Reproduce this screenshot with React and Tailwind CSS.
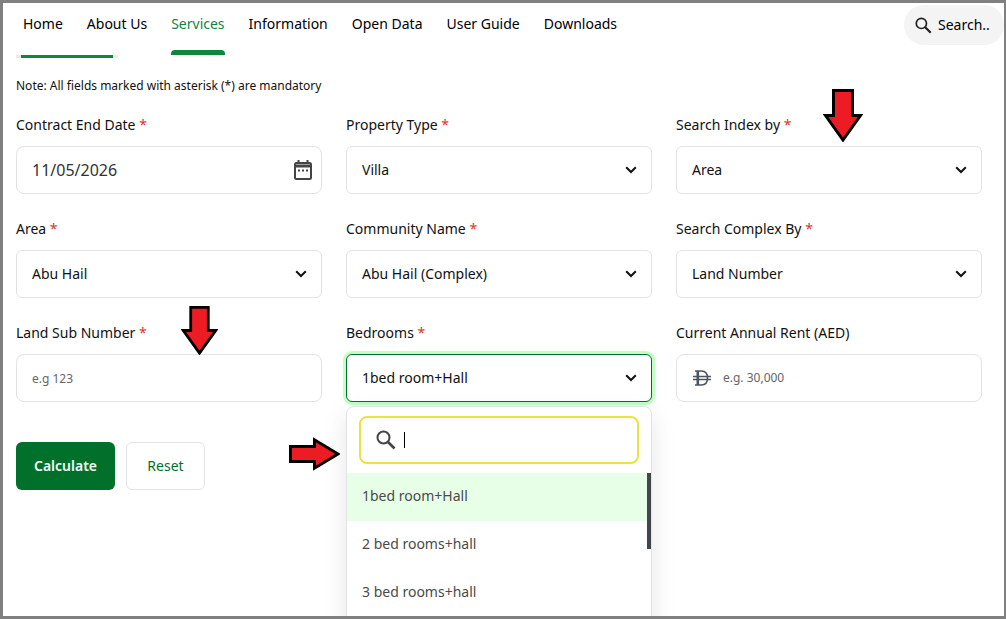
import React, { useState } from 'react';
import clsx from 'clsx';

const NAV = ['Home', 'About Us', 'Services', 'Information', 'Open Data', 'User Guide', 'Downloads'];

const BEDROOMS = ['1bed room+Hall', '2 bed rooms+hall', '3 bed rooms+hall'];

function SearchIcon({ className }) {
  return (
    <svg viewBox="0 0 20 20" className={className} fill="none" stroke="currentColor" aria-hidden="true">
      <circle cx="7.5" cy="7.5" r="6" strokeWidth="2" />
      <path d="M12 12l6.5 6.5" strokeWidth="2.6" />
    </svg>
  );
}

function Chevron() {
  return (
    <svg
      viewBox="0 0 12 8"
      className="pointer-events-none absolute right-[15px] top-5 h-2 w-3"
      fill="none"
      stroke="#111"
      strokeWidth="2"
      aria-hidden="true"
    >
      <path d="M1.2 1.2L6 6l4.8-4.8" />
    </svg>
  );
}

function CalendarIcon() {
  return (
    <svg viewBox="0 0 18 20" className="h-5 w-[18px]" fill="none" stroke="#444" strokeWidth="2" aria-hidden="true">
      <rect x="1" y="3" width="16" height="16" rx="1.5" />
      <path d="M1 6h16" strokeWidth="3" />
      <path d="M4.5 0v4M13.5 0v4" />
      <path d="M4 10.500h2M8 10.500h2M12 10.500h2" />
    </svg>
  );
}

function DirhamIcon() {
  return (
    <svg viewBox="0 0 18 16" className="h-4 w-[18px]" fill="none" stroke="#4b555f" aria-hidden="true">
      <path d="M2 1h6.500c4 0 6 2.600 6 7s-2 7-6 7H2" strokeWidth="1.6" />
      <path d="M4.800 1v14" strokeWidth="2.6" />
      <path d="M0 6.500h18M0 9.500h18" strokeWidth="1.4" />
    </svg>
  );
}

function DownArrow({ className }) {
  return (
    <svg viewBox="0 0 40 53" preserveAspectRatio="none" className={clsx('pointer-events-none absolute z-10', className)} aria-hidden="true">
      <path d="M10.500 1.500h19v25h8L20 51 2.500 26.500h8z" fill="#ed1c24" stroke="#000" strokeWidth="3" />
    </svg>
  );
}

function RightArrow({ className }) {
  return (
    <svg viewBox="0 0 51 34" className={clsx('pointer-events-none absolute z-10', className)} aria-hidden="true">
      <path d="M1.500 9.500h24V2.800L49 17 25.500 31.200v-6.700h-24z" fill="#ed1c24" stroke="#000" strokeWidth="3" />
    </svg>
  );
}

function Field({ id, label, required, children }) {
  return (
    <div className="relative">
      <label htmlFor={id} className="mb-2.5 block text-sm leading-[22px]">
        {label} {required && <span className="text-[#d83731]">*</span>}
      </label>
      {children}
    </div>
  );
}

function Select({ id, options, open, ...props }) {
  return (
    <div className="relative">
      <select
        id={id}
        className={clsx(
          'block h-12 w-full appearance-none rounded-md border bg-white px-[15px] text-sm outline-none',
          open ? 'border-[#00702a] ring-3 ring-[#c2ffc7]' : 'border-[#e1e3e5]'
        )}
        {...props}
      >
        {options.map((o) => (
          <option key={o}>{o}</option>
        ))}
      </select>
      <Chevron />
    </div>
  );
}

export default function App() {
  const [bedrooms, setBedrooms] = useState(BEDROOMS[0]);

  return (
    <div className="h-screen overflow-hidden border-3 border-r-2 border-[#808080] bg-white font-['Noto_Sans',sans-serif] text-[#111]">
      <header className="flex h-[52px] justify-between">
        <nav className="flex gap-6 pl-5 text-sm leading-6 text-black">
          {NAV.map((item) => (
            <a
              key={item}
              href="#"
              className={clsx('flex flex-col justify-between whitespace-nowrap pt-[9px]', item === 'Services' && 'text-[#0f853f]')}
            >
              {item}
              {item === 'Services' && <span className="h-[5px] rounded-t bg-[#0f853f]" />}
            </a>
          ))}
        </nav>
        <button className="mt-0.5 flex h-10 w-[100px] items-center gap-1.5 rounded-full bg-[#f4f4f4] pl-[11px] text-sm text-black">
          <SearchIcon className="h-[17px] w-[17px] shrink-0 text-[#222]" />
          Search..
        </button>
      </header>

      <main className="pl-[13px] pr-[22px]">
        <div className="h-[3px] w-[102px] bg-[#ebebe6] px-[5px]">
          <div className="h-full bg-[#0f853f]" />
        </div>

        <p className="mb-4 mt-4 text-xs leading-6">Note: All fields marked with asterisk (*) are mandatory</p>

        <form onSubmit={(e) => e.preventDefault()}>
          <div className="grid grid-cols-3 gap-6">
            <Field id="end-date" label="Contract End Date" required>
              <div className="flex h-12 items-center rounded-lg border border-[#e1e3e5] pl-[15px] pr-[9px]">
                <input id="end-date" defaultValue="11/05/2026" className="min-w-0 flex-1 text-[#333] outline-none" />
                <button type="button" aria-label="Pick a date">
                  <CalendarIcon />
                </button>
              </div>
            </Field>
            <Field id="property-type" label="Property Type" required>
              <Select id="property-type" options={['Villa']} />
            </Field>
            <Field id="index-by" label="Search Index by" required>
              <Select id="index-by" options={['Area']} />
              <DownArrow className="-top-[25px] left-[147px] h-[53px] w-10" />
            </Field>

            <Field id="area" label="Area" required>
              <Select id="area" options={['Abu Hail']} />
            </Field>
            <Field id="community" label="Community Name" required>
              <Select id="community" options={['Abu Hail (Complex)']} />
            </Field>
            <Field id="complex-by" label="Search Complex By" required>
              <Select id="complex-by" options={['Land Number']} />
            </Field>

            <Field id="land-sub" label="Land Sub Number" required>
              <input
                id="land-sub"
                placeholder="e.g 123"
                className="block h-12 w-full rounded-lg border border-[#e1e3e5] px-[15px] text-xs leading-4 outline-none placeholder:text-[#666]"
              />
              <DownArrow className="-top-4 left-[165px] h-[49px] w-[37px]" />
            </Field>
            <Field id="bedrooms" label="Bedrooms" required>
              <Select id="bedrooms" options={BEDROOMS} open value={bedrooms} onChange={(e) => setBedrooms(e.target.value)} />
              <RightArrow className="-left-[57px] top-[115px] h-[34px] w-[51px]" />
              <div className="absolute inset-x-0 top-full mt-1 rounded-lg border border-[#e1e3e5] bg-white shadow-[0_8px_24px_rgba(0,0,0,0.1)]">
                <div className="mx-3 my-[9px] flex h-12 items-center rounded-lg border-2 border-[#ebe340] pl-[15px]">
                  <SearchIcon className="h-5 w-5 shrink-0 text-[#444]" />
                  <span className="ml-2 h-4 w-px bg-black" />
                  <input aria-label="Search bedrooms" className="min-w-0 flex-1 text-sm caret-transparent outline-none" />
                </div>
                <div className="relative">
                  <ul role="listbox" aria-label="Bedrooms" className="h-48">
                    {BEDROOMS.map((b) => (
                      <li
                        key={b}
                        role="option"
                        aria-selected={b === bedrooms}
                        onClick={() => setBedrooms(b)}
                        className={clsx('h-12 px-[15px] text-sm leading-[46px] text-[#4a4a4a]', b === bedrooms && 'bg-[#e6ffe6]')}
                      >
                        {b}
                      </li>
                    ))}
                  </ul>
                  <div className="absolute right-0 top-0 h-[76px] w-1 bg-[#41464d]" />
                </div>
              </div>
            </Field>
            <Field id="rent" label="Current Annual Rent (AED)">
              <div className="flex h-12 items-center gap-3 rounded-lg border border-[#e1e3e5] px-4">
                <DirhamIcon />
                <input
                  id="rent"
                  placeholder="e.g. 30,000"
                  className="min-w-0 flex-1 text-xs outline-none placeholder:text-[#666]"
                />
              </div>
            </Field>
          </div>

          <div className="mt-10 flex gap-[11px] text-sm">
            <button type="submit" className="h-12 w-[99px] rounded-md bg-[#00702a] font-semibold text-[#f0fff2]">
              Calculate
            </button>
            <button type="reset" className="h-12 w-[79px] rounded-md border border-[#e1e3e5] text-[#00702a]">
              Reset
            </button>
          </div>
        </form>
      </main>
    </div>
  );
}
